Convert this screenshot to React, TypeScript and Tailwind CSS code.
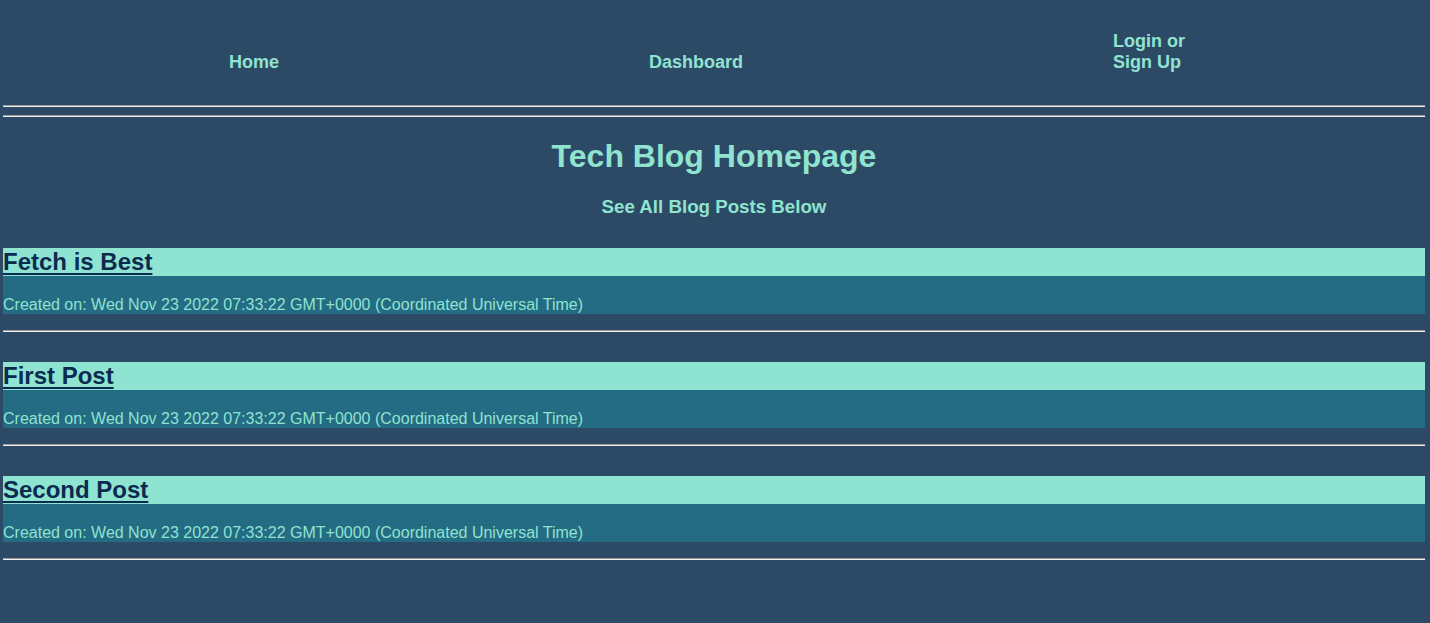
import React from 'react';

const posts = [
  { title: 'Fetch is Best', created: 'Wed Nov 23 2022 07:33:22 GMT+0000 (Coordinated Universal Time)' },
  { title: 'First Post', created: 'Wed Nov 23 2022 07:33:22 GMT+0000 (Coordinated Universal Time)' },
  { title: 'Second Post', created: 'Wed Nov 23 2022 07:33:22 GMT+0000 (Coordinated Universal Time)' },
];

const Rule: React.FC<{ className?: string }> = ({ className = '' }) => (
  <div className={`h-[2px] border-t border-t-[#9a9a9a] border-b border-b-[#eeeeee] ${className}`} />
);

const App: React.FC = () => {
  return (
    <div className="min-h-[623px] bg-[#2c4a66] px-[3px] pr-[5px] font-['Liberation_Sans',Arial,sans-serif]">
      <header className="pt-[31px]">
        <nav className="flex items-end h-[42px] text-[18px] leading-[21px] font-bold text-[#8fe3cf]">
          <a href="#" className="ml-[226px]">Home</a>
          <a href="#" className="ml-[370px]">Dashboard</a>
          <a href="#" className="ml-[370px] w-[76px]">Login or Sign Up</a>
        </nav>
        <Rule className="mt-[32px]" />
      </header>
      <Rule className="mt-[8px]" />

      <main>
        <h1 className="mt-[21px] text-center text-[32px] leading-[37px] font-bold text-[#8fe3cf]">
          Tech Blog Homepage
        </h1>
        <h3 className="mt-[21px] text-center text-[18.72px] leading-[21px] font-bold text-[#8fe3cf]">
          See All Blog Posts Below
        </h3>

        <div className="mt-[31px]">
          {posts.map((p) => (
            <article key={p.title} className="mb-[30px]">
              <div className="h-[28px] bg-[#8fe3d1]">
                <a href="#" className="text-[24px] leading-[28px] font-bold text-[#0b2a4f] underline underline-offset-[3px]">
                  {p.title}
                </a>
              </div>
              <div className="h-[38px] pt-[19px] bg-[#246b84] text-[16px] leading-[19px] text-[#8fe3cf]">
                Created on: {p.created}
              </div>
              <Rule className="mt-[16px]" />
            </article>
          ))}
        </div>
      </main>
    </div>
  );
};

export default App;
